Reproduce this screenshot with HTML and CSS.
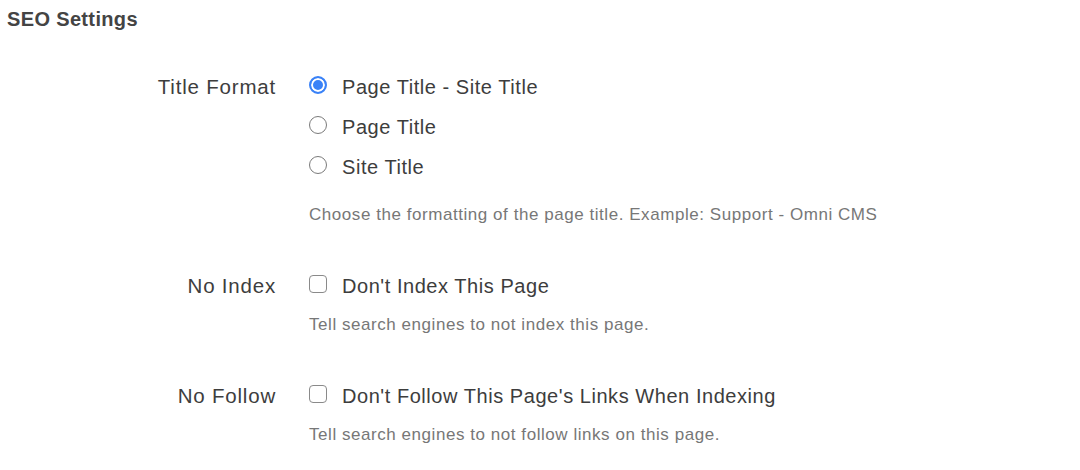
FILE: index.html
```html
<!DOCTYPE html>
<html lang="en">
<head>
<meta charset="utf-8">
<title>SEO Settings</title>
<link rel="stylesheet" href="styles.css">
</head>
<body>
<main class="panel">
  <h2 class="heading">SEO Settings</h2>
  <div class="form">
    <div class="field">
      <div class="label">Title Format</div>
      <div class="control">
        <div class="options radios">
          <label class="option"><input type="radio" name="fmt" checked><span>Page Title - Site Title</span></label>
          <label class="option"><input type="radio" name="fmt"><span>Page Title</span></label>
          <label class="option"><input type="radio" name="fmt"><span>Site Title</span></label>
        </div>
        <p class="help">Choose the formatting of the page title. Example: Support - Omni CMS</p>
      </div>
    </div>
    <div class="field">
      <div class="label">No Index</div>
      <div class="control">
        <div class="options">
          <label class="option"><input type="checkbox"><span>Don't Index This Page</span></label>
        </div>
        <p class="help">Tell search engines to not index this page.</p>
      </div>
    </div>
    <div class="field">
      <div class="label">No Follow</div>
      <div class="control">
        <div class="options">
          <label class="option"><input type="checkbox"><span>Don't Follow This Page's Links When Indexing</span></label>
        </div>
        <p class="help">Tell search engines to not follow links on this page.</p>
      </div>
    </div>
  </div>
</main>
</body>
</html>
```
FILE: styles.css
```css
html, body {
  margin: 0;
  padding: 0;
  background: #ffffff;
}
body {
  font-family: "Liberation Sans", Arial, sans-serif;
  color: #3d3d3d;
  width: 1080px;
  height: 470px;
  overflow: hidden;
}
.panel {
  padding: 7px 0 0 7px;
}
.heading {
  margin: 0;
  font-size: 20px;
  line-height: 24px;
  font-weight: bold;
  color: #444444;
  letter-spacing: 0.35px;
}
.form {
  margin-top: 34px;
  display: flex;
  flex-direction: column;
  gap: 39px;
}
.field {
  display: grid;
  grid-template-columns: 270px 1fr;
  column-gap: 32px;
}
.label {
  text-align: right;
  font-size: 20.5px;
  line-height: 40px;
  color: #3d3d3d;
  letter-spacing: 0.8px;
  padding-top: 2px;
  margin-right: 1px;
}
.options {
  display: flex;
  flex-direction: column;
}
.radios {
  margin-bottom: 20px;
}
.option {
  display: flex;
  align-items: center;
  height: 40px;
  font-size: 20px;
  letter-spacing: 0.55px;
  color: #3d3d3d;
}
.option span {
  padding-top: 4px;
}
.option input {
  appearance: none;
  -webkit-appearance: none;
  margin: 0 15px 0 0;
  width: 18px;
  height: 18px;
  flex: none;
  background: #fff;
  border: 1px solid #7a7a7a;
  box-sizing: border-box;
}
.option input[type="radio"] {
  border-radius: 50%;
}
.option input[type="radio"]:checked {
  border: 2px solid #3a82f7;
  box-shadow: inset 0 0 0 2px #fff;
  background: #3a82f7;
}
.option input[type="checkbox"] {
  border-radius: 4px;
  border-color: #8a8a8a;
}
.help {
  margin: 11px 0 0;
  font-size: 17px;
  line-height: 20px;
  color: #777777;
  letter-spacing: 0.55px;
}
```
